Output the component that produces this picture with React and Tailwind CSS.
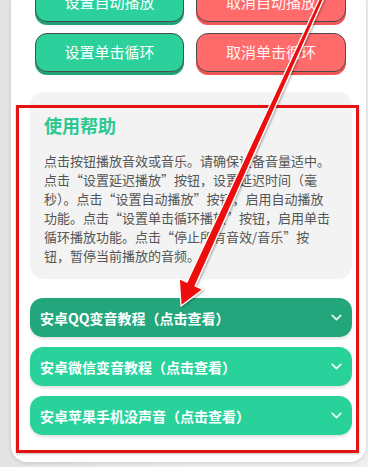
import React from "react";
import { ChevronDown } from "lucide-react";

const bodyParts = [
  "点击按钮播放音效或音乐。请确保设备音量适中。点击",
  "“", "设置延迟播放", "”",
  "按钮，设置延迟时间（毫秒）。点击",
  "“", "设置自动播放", "”",
  "按钮，启用自动播放功能。点击",
  "“", "设置单击循环播放", "”",
  "按钮，启用单击循环播放功能。点击",
  "“", "停止所有音效/音乐", "”",
  "按钮，暂停当前播放的音频。",
];

function GreenBtn({ children }) {
  return (
    <button className="h-[39px] rounded-[12px] bg-[#2bd09b] border-[1.5px] border-[#4b4b4b] shadow-[0_3px_0_#22a079] text-white text-[15px] flex items-center justify-center">
      {children}
    </button>
  );
}

function RedBtn({ children }) {
  return (
    <button className="h-[39px] rounded-[12px] bg-[#ff6a6a] border-[1.5px] border-[#4b4b4b] shadow-[0_3px_0_#f05454] text-[#fff4f4] text-[15px] flex items-center justify-center">
      {children}
    </button>
  );
}

function Acc({ children, dark }) {
  return (
    <div
      className={
        "h-[39px] rounded-[13px] flex items-center justify-between pl-[10px] pr-[7px] shadow-[0_2px_3px_rgba(0,0,0,0.12)] " +
        (dark ? "bg-[#23a67c]" : "bg-[#2ad29b]")
      }
    >
      <span className="text-white font-bold text-[14px] leading-none">{children}</span>
      <ChevronDown size={17} strokeWidth={2.4} className="text-white/90" />
    </div>
  );
}

export default function App() {
  return (
    <div
      lang="zh-CN"
      className="relative w-[368px] h-[467px] overflow-hidden bg-gradient-to-r from-[#e4e4e4] via-[#efefef] to-[#f0f0f0]"
      style={{ fontFamily: '"Noto Sans CJK SC", "Noto Sans", sans-serif' }}
    >
      <div className="ml-[11px] w-[355px] h-[462px] bg-white rounded-b-[16px] shadow-[0_1px_4px_rgba(0,0,0,0.15)] flex flex-col">
        <div className="grid grid-cols-[149px_150px] gap-x-[12px] gap-y-[11px] pl-[24px] mt-[-17px]">
          <GreenBtn>设置自动播放</GreenBtn>
          <RedBtn>取消自动播放</RedBtn>
          <GreenBtn>设置单击循环</GreenBtn>
          <RedBtn>取消单击循环</RedBtn>
        </div>

        <div className="mt-[20px] ml-[19px] w-[322px] h-[187px] bg-[#f2f3f2] rounded-[14px] pl-[14px] pr-[19px] pt-[20px]">
          <div className="text-[18px] leading-[26px] font-bold text-[#2cc892]">使用帮助</div>
          <p className="mt-[13px] text-[13px] leading-[19px] text-[#555]">
            {bodyParts.map((t, i) =>
              t === "“" || t === "”" ? (
                <span key={i} className="[font-feature-settings:'fwid']">{t}</span>
              ) : (
                <React.Fragment key={i}>{t}</React.Fragment>
              )
            )}
          </p>
        </div>

        <div className="mt-[19px] ml-[19px] w-[322px] flex flex-col gap-[10px]">
          <Acc dark>安卓QQ变音教程（点击查看）</Acc>
          <Acc>安卓微信变音教程（点击查看）</Acc>
          <Acc>安卓苹果手机没声音（点击查看）</Acc>
        </div>
      </div>

      <div className="absolute left-[16px] top-[105px] w-[343px] h-[348px] border-[3px] border-[#e41212] shadow-[0_1px_2px_rgba(0,0,0,0.25)] pointer-events-none" />

      <svg className="absolute left-0 top-0 pointer-events-none" width="368" height="467" viewBox="0 0 368 467">
        <defs>
          <filter id="sh" x="-20%" y="-20%" width="140%" height="140%">
            <feDropShadow dx="1" dy="1" stdDeviation="1" floodColor="#000" floodOpacity="0.35" />
          </filter>
        </defs>
        <polygon
          points="320.2,-3 186.9,282.1 179.2,278.6 181,306 202.8,289.4 195.1,285.9 323.8,-1.4"
          fill="#ee1111"
          stroke="#ffffff"
          strokeWidth="1.3"
          strokeLinejoin="round"
          filter="url(#sh)"
        />
      </svg>
    </div>
  );
}
